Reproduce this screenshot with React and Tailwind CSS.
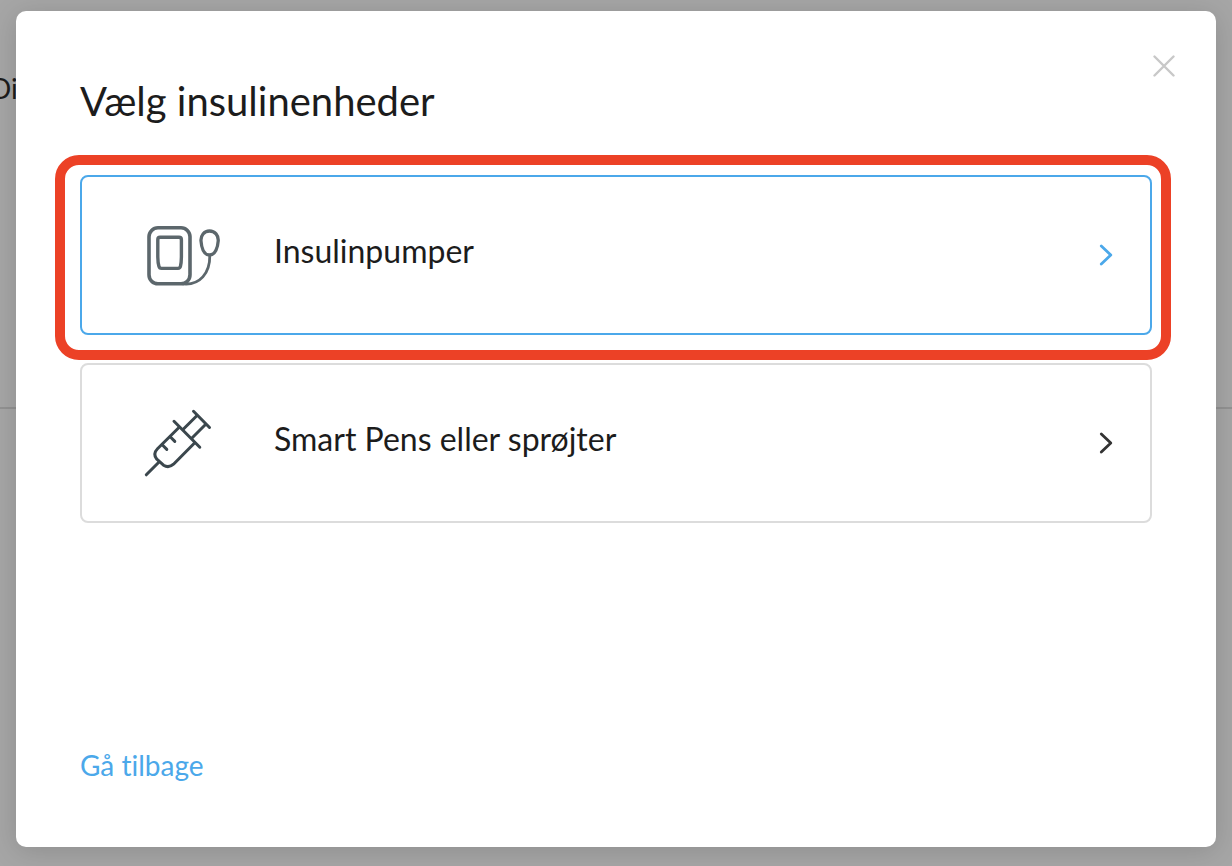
import React from "react";

function PumpIcon() {
  return (
    <svg className="h-20 w-20" viewBox="0 0 80 80" fill="none" stroke="#5c676c" strokeLinecap="round" strokeLinejoin="round" aria-hidden="true">
      <rect x="7" y="12.8" width="41" height="56" rx="9" strokeWidth="3.6" />
      <path d="M18 22.3H37Q39.4 22.3 39.4 24.8V42Q39.3 48 38.5 51.2Q38 53.4 36 53.4H19.5Q17.4 53.4 16.9 51.2Q15.9 48 15.8 42V24.8Q15.8 22.3 18 22.3Z" strokeWidth="3.4" />
      <path d="M67.5 16C73 16 76.6 20.5 76.2 26C75.8 32 73.5 40 67.5 40C61.5 40 59.4 32 59 26C58.6 20.5 62 16 67.5 16Z" strokeWidth="3.3" />
      <path d="M67.8 40.5C68 58 58 70.5 41 68.9" strokeWidth="2.8" />
    </svg>
  );
}

function SyringeIcon() {
  return (
    <svg className="h-20 w-20" viewBox="0 0 80 80" fill="none" stroke="#3b474d" strokeWidth="3" strokeLinecap="round" aria-hidden="true">
      <path d="M51.5 8.3L67.5 24.5" />
      <path d="M54.8 12.7L41.5 26M63.5 21.5L50 35" />
      <path d="M32 18.3L57.8 44.2" />
      <path d="M37.2 24.2L15.5 45.8Q10.5 51 14.8 56.2L21.5 62.2Q26.7 65.5 31.5 61.2L52.8 39.8" strokeLinejoin="round" />
      <path d="M28.2 33.8L32.8 38.4M20.2 41.8L24.8 46.4" />
      <path d="M16.8 59.2L4.3 71.8" />
    </svg>
  );
}

function Chevron() {
  return (
    <svg className="h-6 w-4 shrink-0" viewBox="0 0 16 24" fill="none" stroke="currentColor" strokeWidth="2.8" strokeLinecap="round" strokeLinejoin="round" aria-hidden="true">
      <path d="M3.3 3L12.8 12L3.3 21" />
    </svg>
  );
}

function DeviceOption({ icon, label, selected }) {
  return (
    <div className="relative">
      <button
        type="button"
        className={
          "flex h-40 w-full items-center rounded-lg border-2 bg-white pr-9 pl-15 text-left " +
          (selected ? "border-[#4ba8ea]" : "border-[#dcdcdc]")
        }
      >
        <span className="mr-13 shrink-0">{icon}</span>
        <span className="flex-1 pb-2 text-[32px] leading-10 text-[#1c1c1c]">{label}</span>
        <span className={selected ? "text-[#4ba8ea]" : "text-[#333333]"}>
          <Chevron />
        </span>
      </button>
      {selected && (
        <div className="pointer-events-none absolute -top-5 -right-[19px] -bottom-[25px] -left-[25px] rounded-3xl border-10 border-[#ec4126]" />
      )}
    </div>
  );
}

export default function App() {
  return (
    <div className="relative min-h-screen bg-[#a6a6a6] font-['Lato',sans-serif] text-[#1c1c1c] [font-variant-ligatures:none]">
      <div className="absolute inset-0 overflow-hidden" aria-hidden="true">
        <div className="h-[409px] border-b-2 border-[#929292] pt-[68px]">
          <p className="-ml-2.5 text-[28px] leading-10">Di</p>
        </div>
      </div>

      <div className="relative px-4 pt-[11px] pb-[19px]">
        <main
          role="dialog"
          aria-labelledby="dialog-title"
          className="relative rounded-[10px] bg-white px-16 pt-[66px] pb-[62px] shadow-[0_4px_28px_rgba(0,0,0,0.15)]"
        >
          <button type="button" aria-label="Luk" className="absolute top-10 right-9 p-1 text-[#c8c8c8]">
            <svg className="h-6 w-6" viewBox="0 0 24 24" fill="none" stroke="currentColor" strokeWidth="2.4" strokeLinecap="round" aria-hidden="true">
              <path d="M2.5 1.5L21.5 20.5M21.5 1.5L2.5 20.5" />
            </svg>
          </button>
          <h1 id="dialog-title" className="mb-[50px] text-[40px] leading-12">Vælg insulinenheder</h1>
          <div className="flex flex-col gap-7">
            <DeviceOption selected icon={<PumpIcon />} label="Insulinpumper" />
            <DeviceOption icon={<SyringeIcon />} label="Smart Pens eller sprøjter" />
          </div>
          <a href="#tilbage" className="mt-[222px] inline-block align-top text-[28px] leading-10 text-[#4ba8ea]">
            Gå tilbage
          </a>
        </main>
      </div>
    </div>
  );
}
